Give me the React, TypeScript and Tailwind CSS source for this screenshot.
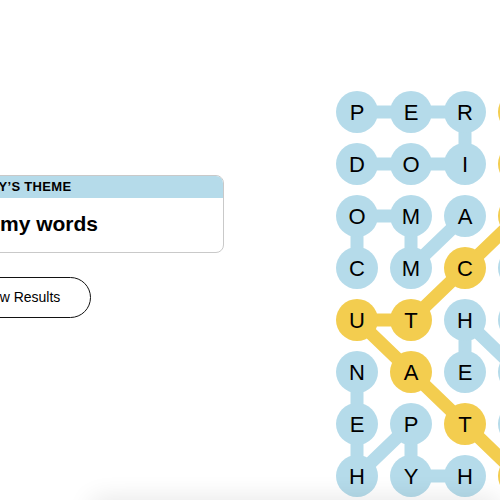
const BLUE = "#b5dbea";
const YELLOW = "#f3cd4f";

const board = [
  ["P", "E", "R", ""],
  ["D", "O", "I", ""],
  ["O", "M", "A", ""],
  ["C", "M", "C", ""],
  ["U", "T", "H", ""],
  ["N", "A", "E", ""],
  ["E", "P", "T", ""],
  ["H", "Y", "H", ""],
];

const spangram = new Set(["0-3", "1-3", "2-3", "3-2", "4-0", "4-1", "5-1", "6-2", "7-3"]);

type Link = [number, number, number, number];

const blueLinks: Link[] = [
  [0, 0, 0, 1], [0, 1, 0, 2], [0, 2, 1, 2],
  [1, 0, 1, 1], [1, 1, 1, 2],
  [2, 0, 2, 1], [2, 0, 3, 0], [2, 1, 3, 1], [2, 2, 3, 1],
  [4, 2, 5, 2], [4, 2, 5, 3],
  [5, 0, 6, 0], [6, 0, 7, 0], [6, 1, 7, 0], [6, 1, 7, 1], [7, 1, 7, 2],
];

const yellowLinks: Link[] = [
  [0, 3, 1, 3], [1, 3, 2, 3], [2, 3, 3, 2], [3, 2, 4, 1],
  [4, 1, 4, 0], [4, 0, 5, 1], [5, 1, 6, 2], [6, 2, 7, 3],
];

// circle centres inside the board: 42px dots, 54px across, 52px down
const cx = (c: number) => 21 + c * 54;
const cy = (r: number) => 21 + r * 52;

function Board() {
  return (
    <div className="relative">
      <svg className="absolute left-0 top-0" width={240} height={420}>
        {[...blueLinks.map((l) => [l, BLUE] as const), ...yellowLinks.map((l) => [l, YELLOW] as const)].map(
          ([[r1, c1, r2, c2], color], i) => (
            <line
              key={i}
              x1={cx(c1)}
              y1={cy(r1)}
              x2={cx(c2)}
              y2={cy(r2)}
              stroke={color}
              strokeWidth={13}
              strokeLinecap="round"
            />
          )
        )}
      </svg>
      <div className="relative grid grid-cols-[repeat(4,42px)] grid-rows-[repeat(8,42px)] gap-x-[12px] gap-y-[10px]">
        {board.map((row, r) =>
          row.map((letter, c) => (
            <button
              key={`${r}-${c}`}
              className={`flex h-[42px] w-[42px] items-center justify-center rounded-full text-[22px] font-medium text-black ${
                spangram.has(`${r}-${c}`) ? "bg-[#f3cd4f]" : "bg-[#b5dbea]"
              }`}
            >
              {letter}
            </button>
          ))
        )}
      </div>
    </div>
  );
}

export default function App() {
  return (
    <div
      className="relative flex h-[500px] w-[500px] overflow-hidden bg-white"
      style={{ fontFamily: '"Liberation Sans", Arial, sans-serif' }}
    >
      <div className="flex w-[336px] shrink-0 flex-col items-start pt-[175px]">
        <div className="ml-[-60px] w-[284px] overflow-hidden rounded-[8px] border border-[#c9c9c9]">
          <div className="h-[22px] bg-[#b5dbea] pl-[21px] text-[13px] font-bold leading-[22px] tracking-[0.3px] text-black">
            TODAY&rsquo;S THEME
          </div>
          <div className="flex h-[54px] items-center pb-[3px] pl-[59px] text-[21px] font-bold text-black">my words</div>
        </div>
        <button className="ml-[-51px] mt-[24px] flex h-[41px] w-[142px] items-center justify-center rounded-full border border-[#121212] text-[14px] text-black">
          View Results
        </button>
      </div>
      <div className="shrink-0 pt-[91px]">
        <Board />
      </div>
      <div className="absolute left-[90px] right-0 top-[500px] h-[20px] rounded-full shadow-[0_0_26px_rgba(0,0,0,0.12)]" />
    </div>
  );
}
